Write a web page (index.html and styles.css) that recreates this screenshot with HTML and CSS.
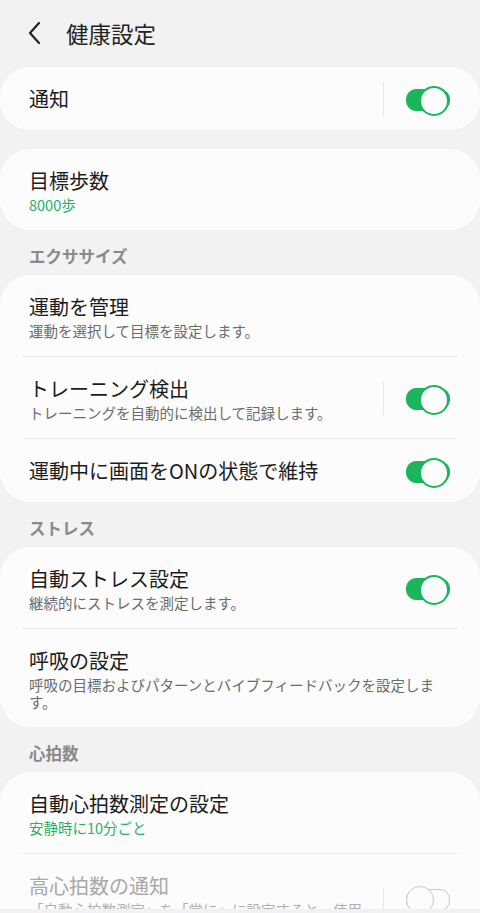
FILE: index.html
```html
<!DOCTYPE html>
<html lang="ja">
  <head>
    <meta charset="UTF-8" />
    <meta name="viewport" content="width=device-width, initial-scale=1.0" />
    <title>健康設定</title>
    <link rel="stylesheet" href="styles.css">
  </head>
  <body>
    <div class="screen">
      <header class="topbar">
        <svg class="back" width="16" height="24" viewBox="0 0 16 24">
          <polyline points="12,2 3,12 12,22" fill="none" stroke="#222" stroke-width="2.2" stroke-linecap="round" stroke-linejoin="round" />
        </svg>
        <h1>健康設定</h1>
      </header>

      <div class="card">
        <div class="row">
          <div class="text"><div class="title">通知</div></div>
          <span class="vline"></span>
          <span class="switch on"></span>
        </div>
      </div>

      <div class="card">
        <div class="row">
          <div class="text">
            <div class="title">目標歩数</div>
            <div class="sub green">8000歩</div>
          </div>
        </div>
      </div>

      <div class="section">エクササイズ</div>
      <div class="card">
        <div class="row">
          <div class="text">
            <div class="title">運動を管理</div>
            <div class="sub">運動を選択して目標を設定します。</div>
          </div>
        </div>
        <div class="row">
          <div class="text">
            <div class="title">トレーニング検出</div>
            <div class="sub">トレーニングを自動的に検出して記録します。</div>
          </div>
          <span class="vline"></span>
          <span class="switch on"></span>
        </div>
        <div class="row">
          <div class="text"><div class="title">運動中に画面をONの状態で維持</div></div>
          <span class="switch on"></span>
        </div>
      </div>

      <div class="section">ストレス</div>
      <div class="card">
        <div class="row">
          <div class="text">
            <div class="title">自動ストレス設定</div>
            <div class="sub">継続的にストレスを測定します。</div>
          </div>
          <span class="switch on"></span>
        </div>
        <div class="row">
          <div class="text">
            <div class="title">呼吸の設定</div>
            <div class="sub">呼吸の目標およびパターンとバイブフィードバックを設定します。</div>
          </div>
        </div>
      </div>

      <div class="section">心拍数</div>
      <div class="card">
        <div class="row">
          <div class="text">
            <div class="title">自動心拍数測定の設定</div>
            <div class="sub green">安静時に10分ごと</div>
          </div>
        </div>
        <div class="row disabled">
          <div class="text">
            <div class="title">高心拍数の通知</div>
            <div class="sub">「自動心拍数測定」を「常に」に設定すると、使用できます。</div>
          </div>
          <span class="vline"></span>
          <span class="switch"></span>
        </div>
      </div>
    </div>
  </body>
</html>
```

FILE: styles.css
```css
* {
  margin: 0;
  padding: 0;
  box-sizing: border-box;
}

body {
  background: #f2f2f2;
  font-family: "Noto Sans CJK JP", "Noto Sans", sans-serif;
  color: #1c1c1c;
  overflow: hidden;
}

.screen {
  height: 909px;
  overflow: hidden;
}

.topbar {
  display: flex;
  align-items: center;
  height: 67px;
  padding: 0 0 0 27px;
}

.topbar .back {
  margin-right: 23px;
  margin-top: -2px;
}

.topbar h1 {
  font-size: 22.5px;
  line-height: 30px;
  font-weight: 400;
  color: #222;
  margin-top: -2px;
}

.card {
  background: #fcfcfc;
  border-radius: 30px;
  padding: 0 23px;
  margin-bottom: 19px;
}

.section {
  font-size: 16.5px;
  font-weight: 700;
  color: #8a8a8a;
  height: 26px;
  line-height: 26px;
  padding-left: 29px;
  margin-top: -6px;
  margin-bottom: 6px;
}

.row {
  display: flex;
  align-items: center;
  padding: 16px 8px 16px 6px;
}

.row + .row {
  border-top: 1px solid #e9e9e9;
}

.text {
  flex: 1;
  min-width: 0;
}

.title {
  font-size: 20px;
  line-height: 31px;
  height: 31px;
}

.sub {
  font-size: 14.5px;
  line-height: 17px;
  color: #6b6b6b;
  margin-bottom: 1px;
}

.sub.green {
  color: #28b06a;
}

.vline {
  flex: none;
  width: 1px;
  height: 34px;
  background: #e6e6e6;
  margin: -2px 22px -2px 10px;
}

.switch {
  position: relative;
  flex: none;
  width: 43px;
  height: 26px;
}

.switch::before {
  content: "";
  position: absolute;
  left: 0;
  top: 3px;
  width: 42px;
  height: 20px;
  border-radius: 10px;
  border: 1.5px solid #c8c8c8;
}

.switch::after {
  content: "";
  position: absolute;
  left: 0;
  top: 0;
  width: 26px;
  height: 26px;
  border-radius: 50%;
  background: #fcfcfc;
  border: 1.5px solid #c8c8c8;
}

.switch.on::before {
  background: #1bb55c;
  border-color: #1bb55c;
}

.switch.on::after {
  left: auto;
  right: 0;
  border: 2px solid #1bb55c;
}

.disabled {
  align-items: flex-start;
}

.disabled .vline {
  margin-top: 18px;
}

.disabled .switch {
  margin-top: 16px;
}

.disabled .title {
  color: #a8a8a8;
}

.disabled .sub {
  color: #b0b0b0;
}
```
